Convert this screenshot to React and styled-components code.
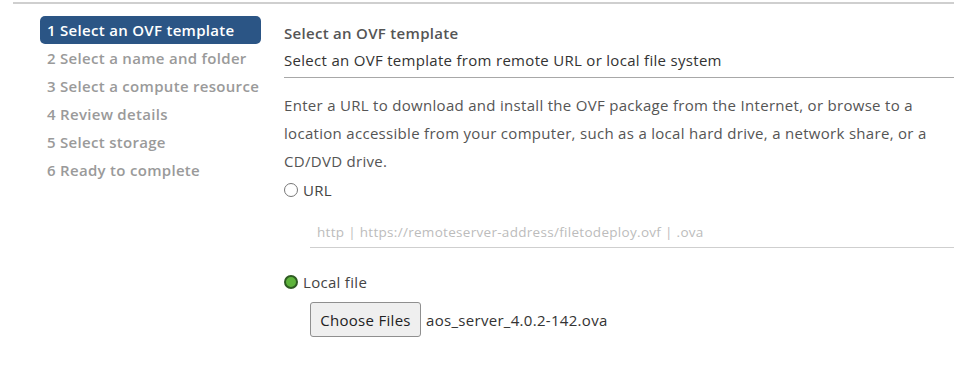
import React from "react";
import styled, { createGlobalStyle } from "styled-components";

const Global = createGlobalStyle`
  html, body { margin: 0; padding: 0; background: #fff; }
  body { font-family: "Open Sans", sans-serif; }
`;

const Page = styled.div`
  width: 954px;
  height: 366px;
  overflow: hidden;
  position: relative;
`;

const TopRule = styled.div`
  margin-left: 13px;
  margin-top: 2px;
  height: 2px;
  background: #cfcfcf;
`;

const Body = styled.div`
  display: grid;
  grid-template-columns: 284px 1fr;
`;

const Steps = styled.ol`
  list-style: none;
  margin: 12px 0 0 40px;
  padding: 0;
  width: 221px;
  display: flex;
  flex-direction: column;
`;

const Step = styled.li`
  height: 28px;
  line-height: 28px;
  padding-left: 7px;
  font-size: 15px;
  letter-spacing: 0.3px;
  font-weight: 600;
  border-radius: 5px;
  white-space: nowrap;
  color: ${(p) => (p.$active ? "#ffffff" : "#9a9a9a")};
  background: ${(p) => (p.$active ? "#2b5585" : "transparent")};
`;

const Main = styled.div`
  padding-top: 15px;
  font-size: 15px;
  letter-spacing: 0.3px;
  color: #444;
`;

const Title = styled.div`
  font-weight: 600;
  color: #555;
  line-height: 28px;
`;

const Subtitle = styled.div`
  line-height: 26px;
  color: #333;
  padding-bottom: 4px;
  border-bottom: 1px solid #a8a8a8;
`;

const Para = styled.p`
  margin: 13px 0 0;
  line-height: 28px;
  color: #555;
  padding-right: 20px;
`;

const RadioRow = styled.label`
  display: flex;
  align-items: center;
  gap: 5px;
  height: 26px;
  color: #444;
`;

const UrlRow = styled(RadioRow)`
  margin-top: 2px;
`;

const RadioDot = styled.span`
  width: 14px;
  height: 14px;
  flex: none;
  box-sizing: border-box;
  border-radius: 50%;
  border: ${(p) => (p.$on ? "2px solid #2e5b22" : "1px solid #777")};
  background: ${(p) => (p.$on ? "#5db33b" : "#fff")};
`;

const UrlInput = styled.div`
  margin: 15px 0 0 26px;
  padding: 0 7px;
  height: 29px;
  line-height: 29px;
  border-bottom: 1px solid #cfcfcf;
  color: #bcbcbc;
  font-size: 13.5px;
`;

const LocalRow = styled(RadioRow)`
  margin-top: 21px;
`;

const FileRow = styled.div`
  display: flex;
  align-items: center;
  gap: 5px;
  margin: 7px 0 0 26px;
`;

const FileButton = styled.div`
  box-sizing: border-box;
  width: 111px;
  height: 35px;
  display: flex;
  align-items: center;
  justify-content: center;
  border: 1px solid #8f8f8f;
  border-radius: 3px;
  background: #efefef;
  color: #222;
`;

const FileName = styled.span`
  color: #333;
`;

const steps = [
  "1 Select an OVF template",
  "2 Select a name and folder",
  "3 Select a compute resource",
  "4 Review details",
  "5 Select storage",
  "6 Ready to complete",
];

export default function App() {
  return (
    <Page>
      <Global />
      <TopRule />
      <Body>
        <Steps>
          {steps.map((s, i) => (
            <Step key={s} $active={i === 0}>
              {s}
            </Step>
          ))}
        </Steps>
        <Main>
          <Title>Select an OVF template</Title>
          <Subtitle>Select an OVF template from remote URL or local file system</Subtitle>
          <Para>
            Enter a URL to download and install the OVF package from the Internet, or browse to a
            location accessible from your computer, such as a local hard drive, a network share, or a
            CD/DVD drive.
          </Para>
          <UrlRow>
            <RadioDot />
            URL
          </UrlRow>
          <UrlInput>http | https://remoteserver-address/filetodeploy.ovf | .ova</UrlInput>
          <LocalRow>
            <RadioDot $on />
            Local file
          </LocalRow>
          <FileRow>
            <FileButton>Choose Files</FileButton>
            <FileName>aos_server_4.0.2-142.ova</FileName>
          </FileRow>
        </Main>
      </Body>
    </Page>
  );
}
